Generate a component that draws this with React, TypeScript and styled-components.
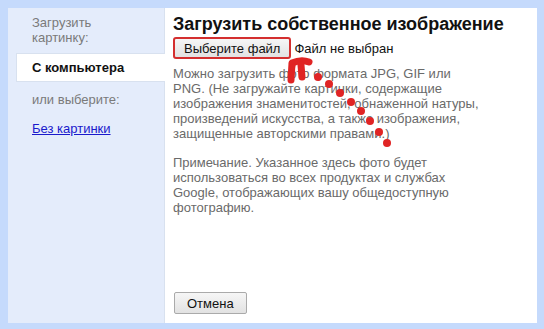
import React from 'react'
import styled, { createGlobalStyle } from 'styled-components'

const GlobalStyle = createGlobalStyle`
  html, body {
    margin: 0;
    padding: 0;
    background: #c5dafc;
  }
  body {
    font-family: "Liberation Sans", Arial, sans-serif;
    font-size: 13px;
  }
`

const Page = styled.div`
  position: relative;
  width: 544px;
  height: 329px;
  box-sizing: border-box;
  padding: 8px 7px 6px 8px;
  background: #c5dafc;
`

const Frame = styled.div`
  display: flex;
  height: 100%;
`

const Sidebar = styled.div`
  width: 156px;
  flex: none;
  background: #e4ecfb;
  padding-top: 7px;
  box-sizing: border-box;
`

const SideLabel = styled.div<{ $gap?: number }>`
  padding-left: 24px;
  color: #7a7a7a;
  line-height: 15px;
  margin-top: ${(p) => p.$gap || 0}px;
`

const Tab = styled.div`
  margin: 8px -1px 0 8px;
  height: 29px;
  box-sizing: border-box;
  display: flex;
  align-items: center;
  padding-left: 15px;
  background: #fff;
  border: 1px solid #d8e1ef;
  border-right: none;
  font-weight: bold;
  color: #111;
  position: relative;
`

const SideLink = styled.a`
  display: block;
  padding-left: 24px;
  margin-top: 14px;
  color: #1a1acc;
  text-decoration: underline;
  line-height: 15px;
`

const Main = styled.div`
  flex: 1;
  background: #fff;
  border-left: 1px solid #d8e1ef;
  padding: 5px 0 9px 8px;
  display: flex;
  flex-direction: column;
`

const Title = styled.h1`
  margin: 0;
  font-size: 18px;
  line-height: 22px;
  font-weight: bold;
  color: #111;
`

const FileRow = styled.div`
  display: flex;
  align-items: center;
  gap: 3px;
  margin-top: 2px;
  color: #111;
`

const Button = styled.button<{ $marked?: boolean }>`
  font-family: "Liberation Sans", Arial, sans-serif;
  font-size: 13px;
  color: #111;
  height: 22px;
  padding: 0 ${(p) => (p.$marked ? 9 : 12)}px;
  background: linear-gradient(#f6f6f6, #e2e2e2);
  border: ${(p) => (p.$marked ? '2px solid #d42f2f' : '1px solid #aaa')};
  border-radius: ${(p) => (p.$marked ? '3px' : '2px')};
  box-sizing: border-box;
`

const Text = styled.p<{ $gap: number }>`
  margin: ${(p) => p.$gap}px 0 0;
  width: 308px;
  color: #6a6a6a;
  line-height: 15px;
`

const Footer = styled.div`
  margin-top: auto;
  margin-left: 1px;
`

const Marks = styled.svg`
  position: absolute;
  left: 0;
  top: 0;
  pointer-events: none;
`

const dots = [
  [318, 77],
  [329, 84],
  [340, 93],
  [351, 102],
  [361, 111],
  [370, 121],
  [379, 132],
  [387, 143],
]

export default function App() {
  return (
    <Page>
      <GlobalStyle />
      <Frame>
        <Sidebar>
          <SideLabel>
            Загрузить
            <br />
            картинку:
          </SideLabel>
          <Tab>С компьютера</Tab>
          <SideLabel $gap={10}>или выберите:</SideLabel>
          <SideLink href="#">Без картинки</SideLink>
        </Sidebar>
        <Main>
          <Title>Загрузить собственное изображение</Title>
          <FileRow>
            <Button $marked>Выберите файл</Button>
            <span>Файл не выбран</span>
          </FileRow>
          <Text $gap={7}>
            Можно загрузить фото формата JPG, GIF или PNG. (Не загружайте картинки, содержащие
            изображения знаменитостей, обнаженной натуры, произведений искусства, а также
            изображения, защищенные авторскими правами.)
          </Text>
          <Text $gap={14}>
            Примечание. Указанное здесь фото будет использоваться во всех продуктах и службах
            Google, отображающих вашу общедоступную фотографию.
          </Text>
          <Footer>
            <Button>Отмена</Button>
          </Footer>
        </Main>
      </Frame>
      <Marks width="544" height="329" viewBox="0 0 544 329">
        <g stroke="#e02424" strokeWidth="7" strokeLinecap="round" strokeLinejoin="round" fill="none">
          <path d="M291 80 L292 63 Q301 59 309 62" />
          <path d="M301 65 L302 77" />
        </g>
        <path d="M289 66 L296 62 L294 74 Z" fill="#e02424" />
        {dots.map(([x, y], i) => (
          <circle key={i} cx={x} cy={y} r={4} fill="#e02424" />
        ))}
      </Marks>
    </Page>
  )
}
